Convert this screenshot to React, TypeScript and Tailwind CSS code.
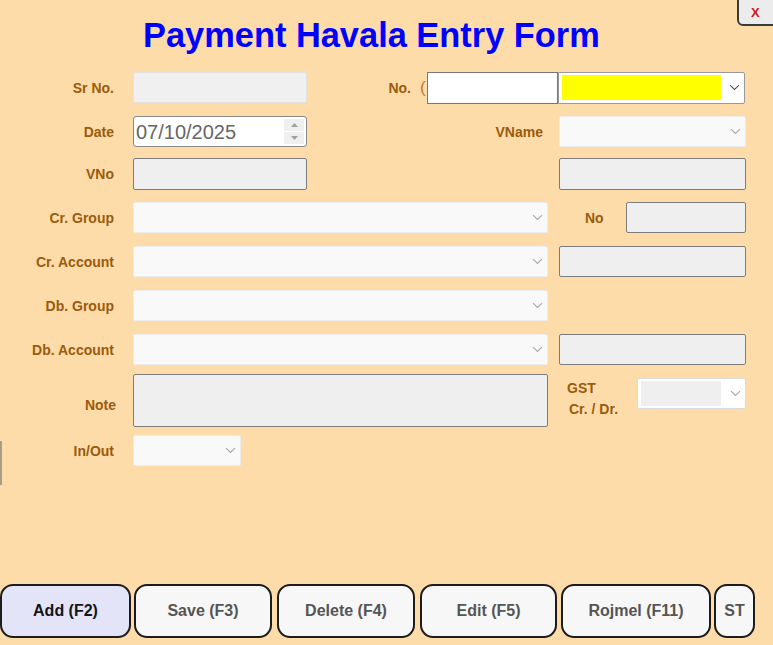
import React from "react";

const labelCls = "text-[14px] font-bold text-[#9a5b0c] leading-none";

function Chevron({ color = "#a8a8a8" }: { color?: string }) {
  return (
    <svg width="11" height="7" viewBox="0 0 11 7" className="shrink-0">
      <path d="M1 1.2 L5.5 5.5 L10 1.2" fill="none" stroke={color} strokeWidth="1.1" />
    </svg>
  );
}

function Label({ text, w = "w-[114px]" }: { text: string; w?: string }) {
  return <div className={`${w} text-right ${labelCls}`}>{text}</div>;
}

// light, disabled-looking combo box
function DimSelect({ w, h = "h-[31px]" }: { w: string; h?: string }) {
  return (
    <div className={`${w} ${h} bg-[#f9f9f9] border border-[#ececec] rounded-[2px] flex items-center justify-end pr-[4px]`}>
      <Chevron />
    </div>
  );
}

// read-only grey text box with dark border
function GreyBox({ w, h = "h-[31px]" }: { w: string; h?: string }) {
  return <div className={`${w} ${h} bg-[#efefef] border border-[#7c7c7c] rounded-[2px]`} />;
}

const buttons = [
  { text: "Add (F2)", w: "w-[131px]", ml: "ml-0", active: true },
  { text: "Save (F3)", w: "w-[138px]", ml: "ml-[3px]", active: false },
  { text: "Delete (F4)", w: "w-[138px]", ml: "ml-[5px]", active: false },
  { text: "Edit (F5)", w: "w-[137px]", ml: "ml-[5px]", active: false },
  { text: "Rojmel (F11)", w: "w-[150px]", ml: "ml-[4px]", active: false },
  { text: "ST", w: "w-[41px]", ml: "ml-[3px]", active: false },
];

export default function App() {
  return (
    <div className="w-[773px] h-[645px] bg-[#fedcaa] relative overflow-hidden flex flex-col font-['Liberation_Sans',Arial,sans-serif]">
      {/* close button */}
      <div className="absolute right-[-8px] top-[-4px] w-[44px] h-[30px] bg-[#ececec] border-2 border-[#3a3a3a] rounded-bl-[6px] rounded-br-[6px] flex items-center pl-[12px] pt-[2px]">
        <span className="text-[13px] font-bold text-[#d4141c] leading-none">X</span>
      </div>
      {/* stray edge line */}
      <div className="absolute left-0 top-[441px] w-[2px] h-[44px] bg-[#a89c8a]" />

      {/* title */}
      <div className="h-[72px] flex items-center pl-[143px] pb-[2px]">
        <h1 className="text-[34.4px] font-bold text-[#0000ff] leading-none">Payment Havala Entry Form</h1>
      </div>

      {/* Sr No. / No. */}
      <div className="flex items-center h-[31px]">
        <Label text="Sr No." />
        <div className="ml-[19px] w-[174px] h-[31px] bg-[#f0f0f0] border border-[#e2e2e2] rounded-[2px]" />
        <div className={`w-[104px] text-right ${labelCls}`}>No.</div>
        <div className="ml-[9px] w-[7px] text-[17px] text-[#c07a1c] leading-none">(</div>
        <div className="w-[131px] h-[32px] bg-white border border-[#777]" />
        <div className="w-[187px] h-[32px] bg-white border border-[#9a9a9a] rounded-r-[2px] flex items-center pl-[3px] pr-[4px]">
          <div className="w-[159px] h-[25px] bg-[#ffff00]" />
          <div className="flex-1 flex justify-end">
            <Chevron color="#555" />
          </div>
        </div>
      </div>

      {/* Date / VName */}
      <div className="flex items-center h-[31px] mt-[13px]">
        <Label text="Date" />
        <div className="ml-[19px] w-[174px] h-[31px] bg-white border border-[#8a8a8a] rounded-[3px] flex items-center pl-[2px] pr-[2px]">
          <span className="flex-1 text-[20px] text-[#666] leading-none">07/10/2025</span>
          <div className="w-[20px] h-[25px] flex flex-col gap-[1px]">
            <div className="flex-1 bg-[#efefef] flex items-center justify-center">
              <svg width="7" height="4" viewBox="0 0 7 4"><path d="M0 4 L3.5 0 L7 4 Z" fill="#a0a0a0" /></svg>
            </div>
            <div className="flex-1 bg-[#efefef] flex items-center justify-center">
              <svg width="7" height="4" viewBox="0 0 7 4"><path d="M0 0 L3.5 4 L7 0 Z" fill="#a0a0a0" /></svg>
            </div>
          </div>
        </div>
        <div className={`w-[236px] text-right ${labelCls}`}>VName</div>
        <div className="ml-[16px]">
          <DimSelect w="w-[187px]" />
        </div>
      </div>

      {/* VNo */}
      <div className="flex items-center h-[32px] mt-[11px]">
        <Label text="VNo" />
        <div className="ml-[19px]">
          <GreyBox w="w-[174px]" h="h-[32px]" />
        </div>
        <div className="ml-[252px]">
          <GreyBox w="w-[187px]" h="h-[32px]" />
        </div>
      </div>

      {/* Cr. Group / No */}
      <div className="flex items-center h-[31px] mt-[12px]">
        <Label text="Cr. Group" />
        <div className="ml-[19px]">
          <DimSelect w="w-[415px]" />
        </div>
        <div className={`w-[78px] pl-[37px] ${labelCls}`}>No</div>
        <GreyBox w="w-[120px]" />
      </div>

      {/* Cr. Account */}
      <div className="flex items-center h-[31px] mt-[13px]">
        <Label text="Cr. Account" />
        <div className="ml-[19px]">
          <DimSelect w="w-[415px]" />
        </div>
        <div className="ml-[11px]">
          <GreyBox w="w-[187px]" />
        </div>
      </div>

      {/* Db. Group */}
      <div className="flex items-center h-[31px] mt-[13px]">
        <Label text="Db. Group" />
        <div className="ml-[19px]">
          <DimSelect w="w-[415px]" />
        </div>
      </div>

      {/* Db. Account */}
      <div className="flex items-center h-[31px] mt-[13px]">
        <Label text="Db. Account" />
        <div className="ml-[19px]">
          <DimSelect w="w-[415px]" />
        </div>
        <div className="ml-[11px] -mt-[1px]">
          <GreyBox w="w-[187px]" />
        </div>
      </div>

      {/* Note / GST */}
      <div className="flex h-[53px] mt-[9px]">
        <div className="flex items-center pt-[8px]">
          <Label text="Note" w="w-[116px]" />
        </div>
        <div className="ml-[17px]">
          <GreyBox w="w-[415px]" h="h-[53px]" />
        </div>
        <div className={`ml-[19px] w-[70px] pt-[7px] ${labelCls}`}>
          <div>GST</div>
          <div className="mt-[7px] pl-[2px]">Cr. / Dr.</div>
        </div>
        <div className="ml-[0px] mt-[4px] w-[109px] h-[31px] bg-white border border-[#dcdcdc] rounded-[2px] flex items-center pl-[3px] pr-[4px]">
          <div className="w-[80px] h-[25px] bg-[#efefef]" />
          <div className="flex-1 flex justify-end">
            <Chevron />
          </div>
        </div>
      </div>

      {/* In/Out */}
      <div className="flex items-center h-[31px] mt-[8px]">
        <Label text="In/Out" />
        <div className="ml-[19px]">
          <DimSelect w="w-[108px]" />
        </div>
      </div>

      {/* action buttons */}
      <div className="mt-auto mb-[7px] flex h-[54px]">
        {buttons.map((b) => (
          <div
            key={b.text}
            className={`${b.w} ${b.ml} h-[54px] border-2 border-[#1c1c1c] rounded-[13px] flex items-center justify-center text-[16px] font-bold leading-none ${
              b.active ? "bg-[#e4e4f8] text-[#151515]" : "bg-[#f7f7f7] text-[#555]"
            }`}
          >
            {b.text}
          </div>
        ))}
      </div>
    </div>
  );
}
